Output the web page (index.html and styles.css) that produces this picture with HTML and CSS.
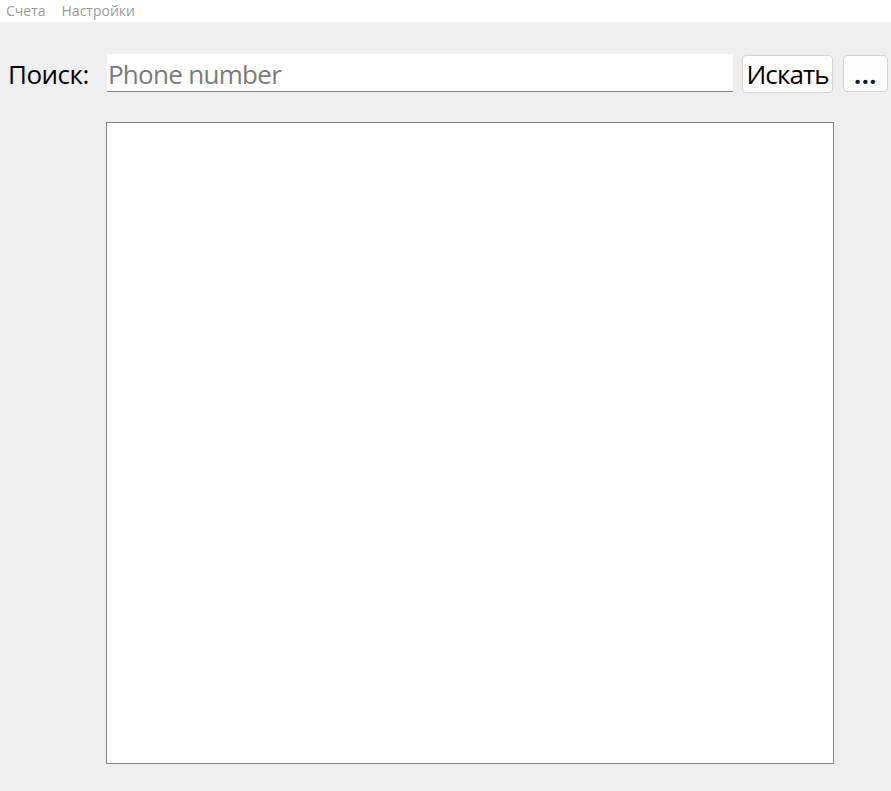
FILE: index.html
```html
<!DOCTYPE html>
<html>
<head>
<meta charset="utf-8">
<link rel="stylesheet" href="styles.css">
</head>
<body>
<div class="menubar">
  <span class="menu-item">Счета</span>
  <span class="menu-item">Настройки</span>
</div>
<div class="content">
  <div class="search-row">
    <label class="search-label">Поиск:</label>
    <input class="search-input" type="text" placeholder="Phone number">
    <button class="btn btn-search">Искать</button>
    <button class="btn btn-more">...</button>
  </div>
  <div class="list-row">
    <div class="list-box"></div>
  </div>
</div>
</body>
</html>
```

FILE: styles.css
```css
html, body {
  margin: 0;
  padding: 0;
  height: 100%;
}
body {
  background: #efefef;
  font-family: "Open Sans", "Noto Sans", sans-serif;
}
.menubar {
  height: 22px;
  background: #ffffff;
  display: flex;
  align-items: center;
  padding-left: 6px;
  gap: 16px;
}
.menu-item {
  font-size: 14px;
  color: #9a9a9a;
  line-height: 22px;
}
.content {
  padding: 32px 3px 0 8px;
}
.search-row {
  display: flex;
  align-items: flex-start;
  height: 39px;
}
.search-label {
  width: 99px;
  font-size: 26px;
  color: #000;
  line-height: 40px;
  letter-spacing: -0.5px;
  white-space: nowrap;
}
.search-input {
  width: 627px;
  height: 38px;
  box-sizing: border-box;
  border: none;
  border-bottom: 1px solid #858585;
  background: #fff;
  margin: 0;
  padding: 3px 0 0 1px;
  font-family: inherit;
  font-size: 26px;
  letter-spacing: -0.7px;
  color: #000;
  outline: none;
}
.search-input::placeholder {
  color: #7b7b7b;
}
.btn {
  box-sizing: border-box;
  height: 38px;
  margin-top: 1px;
  background: #fdfdfd;
  border: 1px solid #d4d4d4;
  border-radius: 4px;
  font-family: inherit;
  color: #000;
  padding: 0;
}
.btn-search {
  width: 91px;
  margin-left: 9px;
  font-size: 26px;
  line-height: 36px;
  letter-spacing: -0.9px;
  white-space: nowrap;
}
.btn-more {
  width: 45px;
  height: 37px;
  margin-left: 10px;
  font-size: 25px;
  font-weight: bold;
  line-height: 34px;
  letter-spacing: 0.5px;
  color: #0a1a3a;
}
.list-row {
  padding-top: 29px;
  padding-left: 98px;
}
.list-box {
  width: 728px;
  height: 642px;
  box-sizing: border-box;
  background: #fff;
  border: 1px solid #858590;
}
```
